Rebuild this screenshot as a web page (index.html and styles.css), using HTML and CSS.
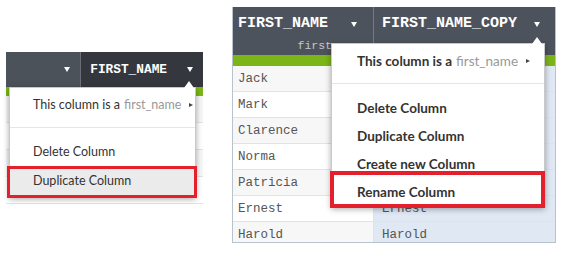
FILE: index.html
```html
<!DOCTYPE html>
<html lang="en">
<head>
    <meta charset="UTF-8">
    <title>Column menu</title>
    <link rel="stylesheet" href="styles.css">
</head>
<body>
<div class="page">

    <div class="shot shotSmall">
        <div class="gridHead">
            <div class="headCell headA"><span class="caret"></span></div>
            <div class="headCell headB">FIRST_NAME <span class="caret"></span></div>
        </div>
        <div class="greenBar"></div>
        <div class="row odd"></div>
        <div class="row"></div>
        <div class="row odd"></div>
        <div class="row"></div>

        <div class="menu menuSmall">
            <div class="menuTop">This column is a <span class="typeName">first_name</span> <span class="arrowRight"></span></div>
            <div class="menuItems">
                <div class="menuItem">Delete Column</div>
                <div class="menuItem marked">Duplicate Column</div>
            </div>
        </div>
    </div>

    <div class="shot shotBig">
        <div class="table">
            <div class="bigHead">
                <div class="bigHeadCell colA">
                    <div class="headName">FIRST_NAME <span class="caret"></span></div>
                    <div class="headType">first</div>
                </div>
                <div class="bigHeadCell colB">
                    <div class="headName">FIRST_NAME_COPY <span class="caret"></span></div>
                    <div class="headType"></div>
                </div>
            </div>
            <div class="greenBar"></div>
            <div class="bigRow odd"><div class="cell colA">Jack</div><div class="cell colB"></div></div>
            <div class="bigRow"><div class="cell colA">Mark</div><div class="cell colB"></div></div>
            <div class="bigRow odd"><div class="cell colA">Clarence</div><div class="cell colB"></div></div>
            <div class="bigRow"><div class="cell colA">Norma</div><div class="cell colB"></div></div>
            <div class="bigRow odd"><div class="cell colA">Patricia</div><div class="cell colB"></div></div>
            <div class="bigRow"><div class="cell colA">Ernest</div><div class="cell colB">Ernest</div></div>
            <div class="bigRow odd last"><div class="cell colA">Harold</div><div class="cell colB">Harold</div></div>
        </div>

        <div class="menu menuBig">
            <div class="menuTop">This column is a <span class="typeName">first_name</span> <span class="arrowRight"></span></div>
            <div class="menuItems">
                <div class="menuItem">Delete Column</div>
                <div class="menuItem">Duplicate Column</div>
                <div class="menuItem">Create new Column</div>
                <div class="menuItem marked">Rename Column</div>
            </div>
        </div>
    </div>

</div>
</body>
</html>
```

FILE: styles.css
```css
* {
    box-sizing: border-box;
}

body {
    margin: 0;
    background: #fff;
    font-family: Lato, "Open Sans", sans-serif;
}

.page {
    display: flex;
    align-items: flex-start;
    padding-left: 6px;
    width: 562px;
    height: 253px;
    overflow: hidden;
}

.shot {
    position: relative;
}

/* small shot on the left */
.shotSmall {
    margin-top: 52px;
    width: 197px;
    height: 145px;
}

.gridHead {
    display: flex;
    height: 35px;
}

.headCell {
    display: flex;
    align-items: center;
    justify-content: flex-end;
    padding-right: 10px;
    color: #fff;
    font: bold 12.8px "Liberation Mono", "DejaVu Sans Mono", monospace;
}

.headA {
    width: 75px;
    background: #4c525a;
    border-right: 1px solid #6b7077;
}

.headB {
    flex: 1;
    background: #34383e;
    gap: 20px;
}

.caret {
    display: inline-block;
    width: 0;
    height: 0;
    border-left: 3.5px solid transparent;
    border-right: 3.5px solid transparent;
    border-top: 5px solid #fff;
}

.greenBar {
    height: 9px;
    background: #7cb518;
}

.row {
    height: 27px;
    border-bottom: 1px solid #e4e4e4;
}

.row.odd {
    background: #f7f7f7;
}

/* big shot on the right */
.shotBig {
    margin-left: 29px;
    margin-top: 7px;
    width: 324px;
}

.table {
    border-left: 1px solid #b8c3cf;
    border-right: 1px solid #b8c3cf;
    border-bottom: 1px solid #b8c3cf;
}

.bigHead {
    display: flex;
    height: 48px;
}

.bigHeadCell {
    background: #4d535c;
    color: #fff;
    padding: 8px 0 0 5px;
}

.colA {
    width: 141px;
    border-right: 1px solid #767b82;
}

.colB {
    flex: 1;
    padding-left: 8px;
}

.headName {
    display: flex;
    align-items: center;
    font: bold 15px "Liberation Mono", "DejaVu Sans Mono", monospace;
    line-height: 18px;
}

.colA .headName {
    gap: 23px;
}

.colB .headName {
    gap: 17px;
}

.headType {
    height: 14px;
    text-align: right;
    padding-right: 41px;
    margin-top: 6px;
    font: 11.5px "Liberation Mono", "DejaVu Sans Mono", monospace;
    line-height: 14px;
    color: #c3c7cc;
}

.shotBig .greenBar {
    height: 11px;
}

.bigRow {
    display: flex;
    height: 26px;
    border-bottom: 1px solid #e2e2e2;
}

.bigRow:first-of-type {
    height: 27px;
}

.bigRow.last {
    height: 20px;
    border-bottom: none;
}

.cell {
    padding: 6px 0 0 5px;
    font: 12.5px "Liberation Mono", "DejaVu Sans Mono", monospace;
    color: #555;
    background: #fff;
}

.bigRow.odd .cell.colA {
    background: #f7f7f7;
}

.cell.colA {
    border-right: 1px solid #e2e2e2;
}

.cell.colB {
    background: #dfe8f3;
    padding-left: 8px;
}

/* dropdown menus */
.menu {
    position: absolute;
    background: #fff;
    border: 1px solid #c9c9c9;
    box-shadow: 0 2px 6px rgba(0, 0, 0, 0.35);
    color: #333;
}

.menu::before {
    content: "";
    position: absolute;
    top: -7px;
    width: 0;
    height: 0;
    border-left: 5px solid transparent;
    border-right: 5px solid transparent;
    border-bottom: 7px solid #fff;
}

.menuTop {
    border-bottom: 1px solid #e6e6e6;
    display: flex;
    align-items: center;
    white-space: nowrap;
}

.typeName {
    color: #999;
    font-weight: normal;
    margin-left: 4px;
}

.arrowRight {
    display: inline-block;
    width: 0;
    height: 0;
    margin-left: 8px;
    border-top: 2.5px solid transparent;
    border-bottom: 2.5px solid transparent;
    border-left: 4px solid #444;
}

.menuItem {
    position: relative;
    white-space: nowrap;
}

.menuItem.marked::after {
    content: "";
    position: absolute;
    border-style: solid;
    border-color: #e3202b;
}

.menuSmall {
    left: 3px;
    top: 35px;
    width: 187px;
    height: 110px;
    font-size: 12.5px;
}

.menuSmall::before {
    right: 1px;
}

.menuSmall .menuTop {
    height: 40px;
    padding: 0 0 6px 23px;
}

.menuSmall .menuItems {
    padding-top: 10px;
}

.menuSmall .menuItem {
    height: 29px;
    line-height: 28px;
    padding-left: 23px;
}

.menuSmall .menuItem.marked {
    background: #ebebeb;
}

.menuSmall .menuItem.marked::after {
    top: -1px;
    bottom: -2px;
    left: -3px;
    right: -2px;
    border-width: 3px;
}

.menuBig {
    left: 99px;
    top: 36px;
    width: 214px;
    height: 164px;
    font-size: 13.5px;
    font-weight: bold;
}

.menuBig::before {
    right: 2px;
}

.menuBig .menuTop {
    height: 40px;
    padding: 0 0 6px 25px;
}

.menuBig .menuItems {
    padding-top: 10px;
}

.menuBig .menuItem {
    height: 28px;
    line-height: 28px;
    padding-left: 25px;
}

.menuBig .menuItem.marked::after {
    top: -7px;
    bottom: -2px;
    left: -2px;
    right: -1px;
    border-width: 4px;
}
```
